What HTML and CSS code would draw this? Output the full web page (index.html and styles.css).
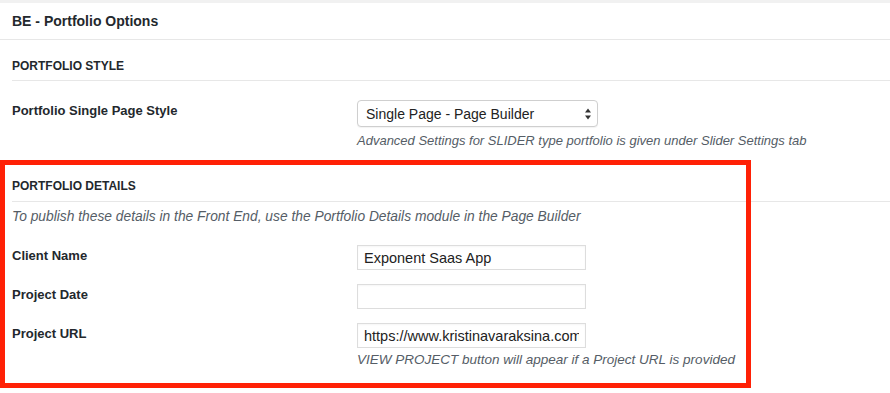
FILE: index.html
```html
<!DOCTYPE html>
<html lang="en">
<head>
  <meta charset="UTF-8">
  <meta name="viewport" content="width=device-width, initial-scale=1.0">
  <title>BE - Portfolio Options</title>
  <link rel="stylesheet" href="styles.css">
</head>
<body>
  <div class="topbar"></div>

  <div class="panel">
    <h2 class="panel-title">BE - Portfolio Options</h2>

    <div class="options">
      <h3 class="section-title">Portfolio Style</h3>

      <div class="field">
        <label class="field-label">Portfolio Single Page Style</label>
        <div class="field-control">
          <div class="select-wrap">
            <select class="select">
              <option>Single Page - Page Builder</option>
            </select>
            <!-- up / down arrows of the select -->
            <svg class="select-arrows" width="8" height="14" viewBox="0 0 8 14">
              <path d="M4 1.5 L7 5.5 L1 5.5 Z" fill="#333"/>
              <path d="M4 12.5 L7 8.5 L1 8.5 Z" fill="#333"/>
            </svg>
          </div>
          <p class="description">Advanced Settings for SLIDER type portfolio is given under Slider Settings tab</p>
        </div>
      </div>

      <h3 class="section-title section-gap">Portfolio Details</h3>
      <p class="description intro">To publish these details in the Front End, use the Portfolio Details module in the Page Builder</p>

      <div class="field field-text first-text">
        <label class="field-label">Client Name</label>
        <div class="field-control">
          <input class="text-input" type="text" value="Exponent Saas App">
        </div>
      </div>

      <div class="field field-text">
        <label class="field-label">Project Date</label>
        <div class="field-control">
          <input class="text-input" type="text" value="">
        </div>
      </div>

      <div class="field field-text">
        <label class="field-label">Project URL</label>
        <div class="field-control">
          <input class="text-input" type="text" value="https://www.kristinavaraksina.com/">
          <p class="description help">VIEW PROJECT button will appear if a Project URL is provided</p>
        </div>
      </div>
    </div>
  </div>

  <!-- Highlight frame drawn over the details section -->
  <div class="highlight"></div>
</body>
</html>
```

FILE: styles.css
```css
* {
  margin: 0;
  padding: 0;
  box-sizing: border-box;
}

body {
  background-color: white;
  color: #23282d;
  font-family: "Liberation Sans", Arial, sans-serif;
  position: relative;
  min-height: 393px;
}

.topbar {
  height: 3px;
  background-color: #f1f1f1;
}

.panel-title {
  font-size: 14px;
  font-weight: bold;
  line-height: 20px;
  padding: 8px 12px 8px 12px;
  border-bottom: 1px solid #e7e7e7;
}

.options {
  padding-left: 12px;
}

.section-title {
  font-size: 12px;
  font-weight: bold;
  text-transform: uppercase;
  line-height: 16px;
  padding: 18px 0 6px 0;
  border-bottom: 1px solid #e7e7e7;
}

.section-gap {
  padding-top: 28px;
  padding-bottom: 7px;
}

.field {
  display: flex;
  padding-top: 19px;
}

.field-text {
  padding-top: 14px;
}

.first-text {
  padding-top: 19px;
}

.field-label {
  width: 345px;
  flex-shrink: 0;
  font-size: 13px;
  font-weight: bold;
  line-height: 22px;
}

.select-wrap {
  position: relative;
  width: 241px;
  height: 27px;
}

.select {
  appearance: none;
  -webkit-appearance: none;
  width: 100%;
  height: 100%;
  border: 1px solid #cfcfcf;
  border-radius: 4px;
  background-color: white;
  box-shadow: 0 1px 1px rgba(0, 0, 0, 0.05);
  font-family: "Liberation Sans", Arial, sans-serif;
  font-size: 14px;
  color: #222;
  padding: 0 8px;
  outline: none;
}

.select-arrows {
  position: absolute;
  right: 6px;
  top: 7px;
}

.description {
  font-size: 13px;
  font-style: italic;
  line-height: 18px;
  color: #555d66;
  margin-top: 5px;
}

.intro {
  font-size: 13.8px;
  margin-top: 6px;
}

.help {
  font-size: 13.5px;
  margin-top: 3px;
}

.text-input {
  display: block;
  width: 229px;
  height: 25px;
  border: 1px solid #dddddd;
  box-shadow: inset 0 1px 2px rgba(0, 0, 0, 0.04);
  font-family: "Liberation Sans", Arial, sans-serif;
  font-size: 14.5px;
  color: #222;
  padding: 0 6px;
  outline: none;
}

.highlight {
  position: absolute;
  left: 0;
  top: 160px;
  width: 751px;
  height: 228px;
  border: 5px solid #ff2106;
  pointer-events: none;
}
```
